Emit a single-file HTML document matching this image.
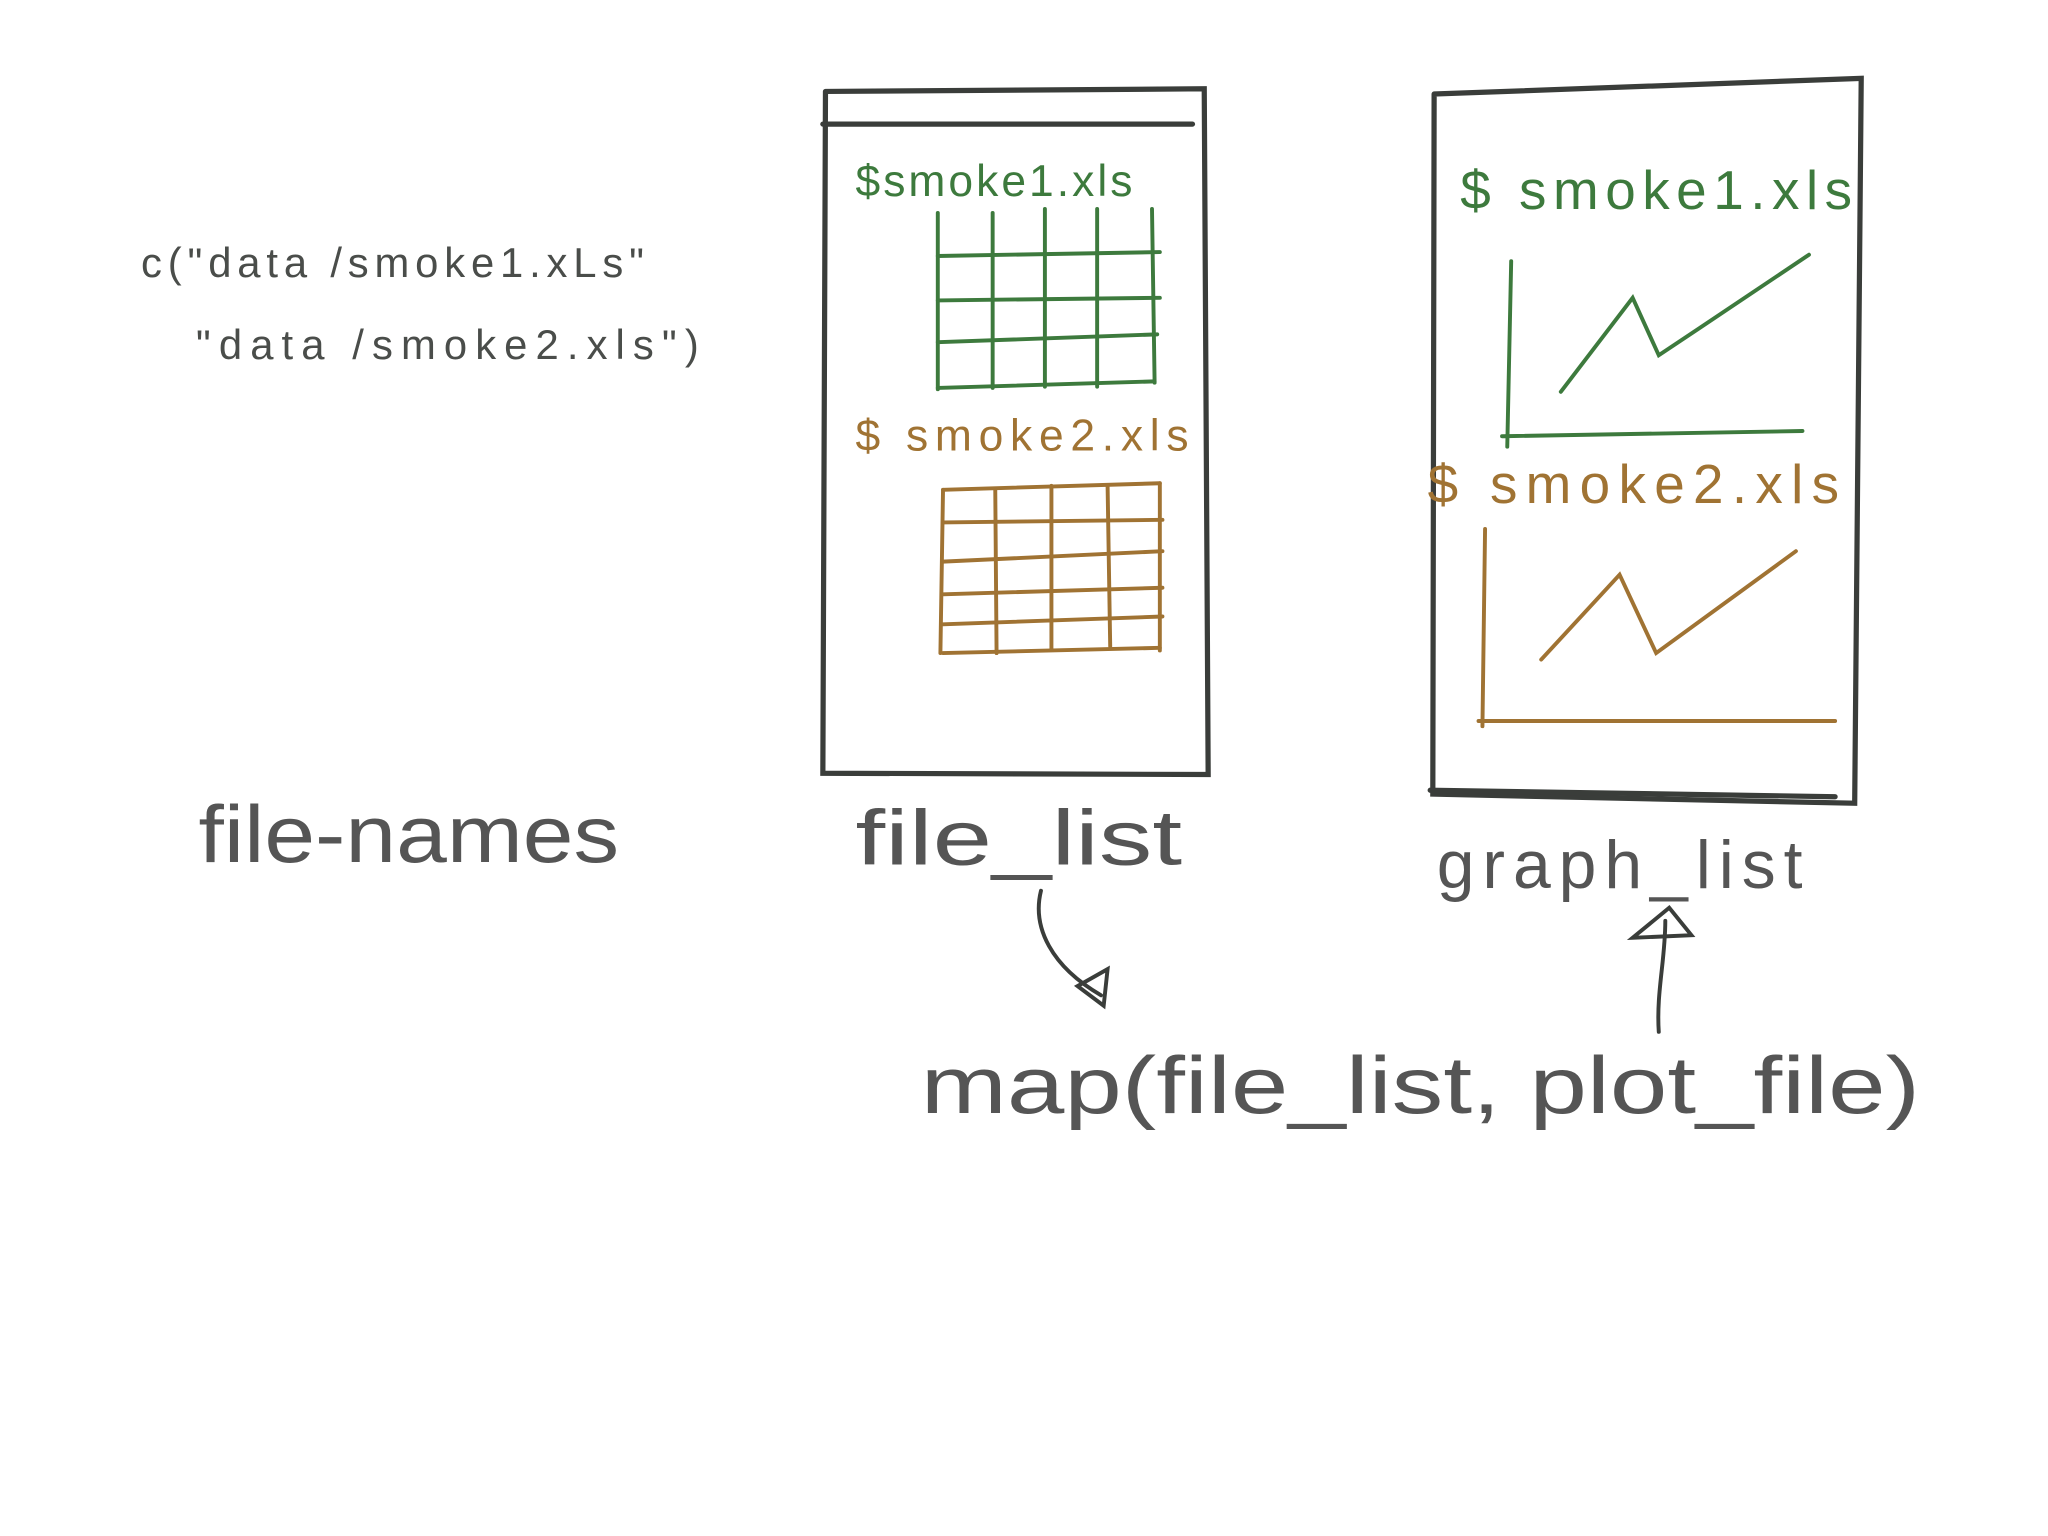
<!DOCTYPE html>
<html><head><meta charset="utf-8"><style>
html,body{margin:0;padding:0;background:#fff;width:2048px;height:1536px;overflow:hidden}
svg{display:block}
text{font-family:"Liberation Sans",sans-serif}
</style></head><body>
<svg width="2048" height="1536" viewBox="0 0 1568 1176" xmlns="http://www.w3.org/2000/svg">
<rect width="1568" height="1176" fill="#fff"/>
<g fill="#4a4d4a">
<text x="108" y="212" font-size="32" textLength="385" lengthAdjust="spacing">c("data /smoke1.xLs"</text>
<text x="150" y="275" font-size="32" textLength="385" lengthAdjust="spacing">"data /smoke2.xls")</text>
<text x="152" y="660" font-size="62" fill="#555" textLength="322" lengthAdjust="spacingAndGlyphs">file-names</text>
<text x="655" y="662" font-size="60" fill="#555" textLength="250" lengthAdjust="spacingAndGlyphs">file_list</text>
<text x="1100" y="680" font-size="52" fill="#555" textLength="280" lengthAdjust="spacing">graph_list</text>
<text x="705" y="852" font-size="62" fill="#555" textLength="765" lengthAdjust="spacingAndGlyphs">map(file_list, plot_file)</text>
</g>
<g fill="none" stroke="#3a3d3a" stroke-width="4" stroke-linecap="round">
<path d="M632 70 L630 592 L925 593 L922 68 L632 70"/>
<path d="M630 95 L913 95"/>
<path d="M1098 72 L1097 608 L1420 615 L1425 60 L1098 72"/>
<path d="M1095 605 L1405 610"/>
<path d="M797 682 C790 710 805 740 843 762" stroke-width="3"/>
<path d="M825 755 L848 742 L845 770 Z" stroke-width="3"/>
<path d="M1270 790 C1268 760 1275 735 1275 705" stroke-width="3"/>
<path d="M1250 718 L1278 695 L1295 716 Z" stroke-width="3"/>
</g>
<g fill="#3d7a3d">
<text x="655" y="150" font-size="34" textLength="212" lengthAdjust="spacing">$smoke1.xls</text>
<text x="1118" y="160" font-size="42" textLength="300" lengthAdjust="spacing">$ smoke1.xls</text>
</g>
<g fill="#a07333">
<text x="655" y="345" font-size="34" textLength="255" lengthAdjust="spacing">$ smoke2.xls</text>
<text x="1093" y="385" font-size="42" textLength="315" lengthAdjust="spacing">$ smoke2.xls</text>
</g>
<g stroke="#3d7a3d" stroke-width="3" fill="none" stroke-linecap="round">
<path d="M718 163 L718 298 M760 163 L760 297 M800 160 L800 296 M840 160 L840 296 M882 160 L884 293"/>
<path d="M718 196 L888 193 M718 230 L888 228 M718 262 L886 256 M718 297 L884 292"/>
<path d="M1157 200 L1154 342 M1150 334 L1380 330"/>
<path d="M1195 300 L1250 228 L1270 272 L1300 252 L1385 195"/>
</g>
<g stroke="#a07333" stroke-width="3" fill="none" stroke-linecap="round">
<path d="M722 375 L720 500 M762 375 L763 500 M805 372 L805 497 M848 372 L850 495 M888 370 L888 498"/>
<path d="M722 375 L888 370 M722 400 L890 398 M722 430 L890 422 M722 455 L890 450 M722 478 L890 472 M722 500 L888 496"/>
<path d="M1137 405 L1135 556 M1132 552 L1405 552"/>
<path d="M1180 505 L1240 440 L1268 500 L1375 422"/>
</g>
</svg>
</body></html>
